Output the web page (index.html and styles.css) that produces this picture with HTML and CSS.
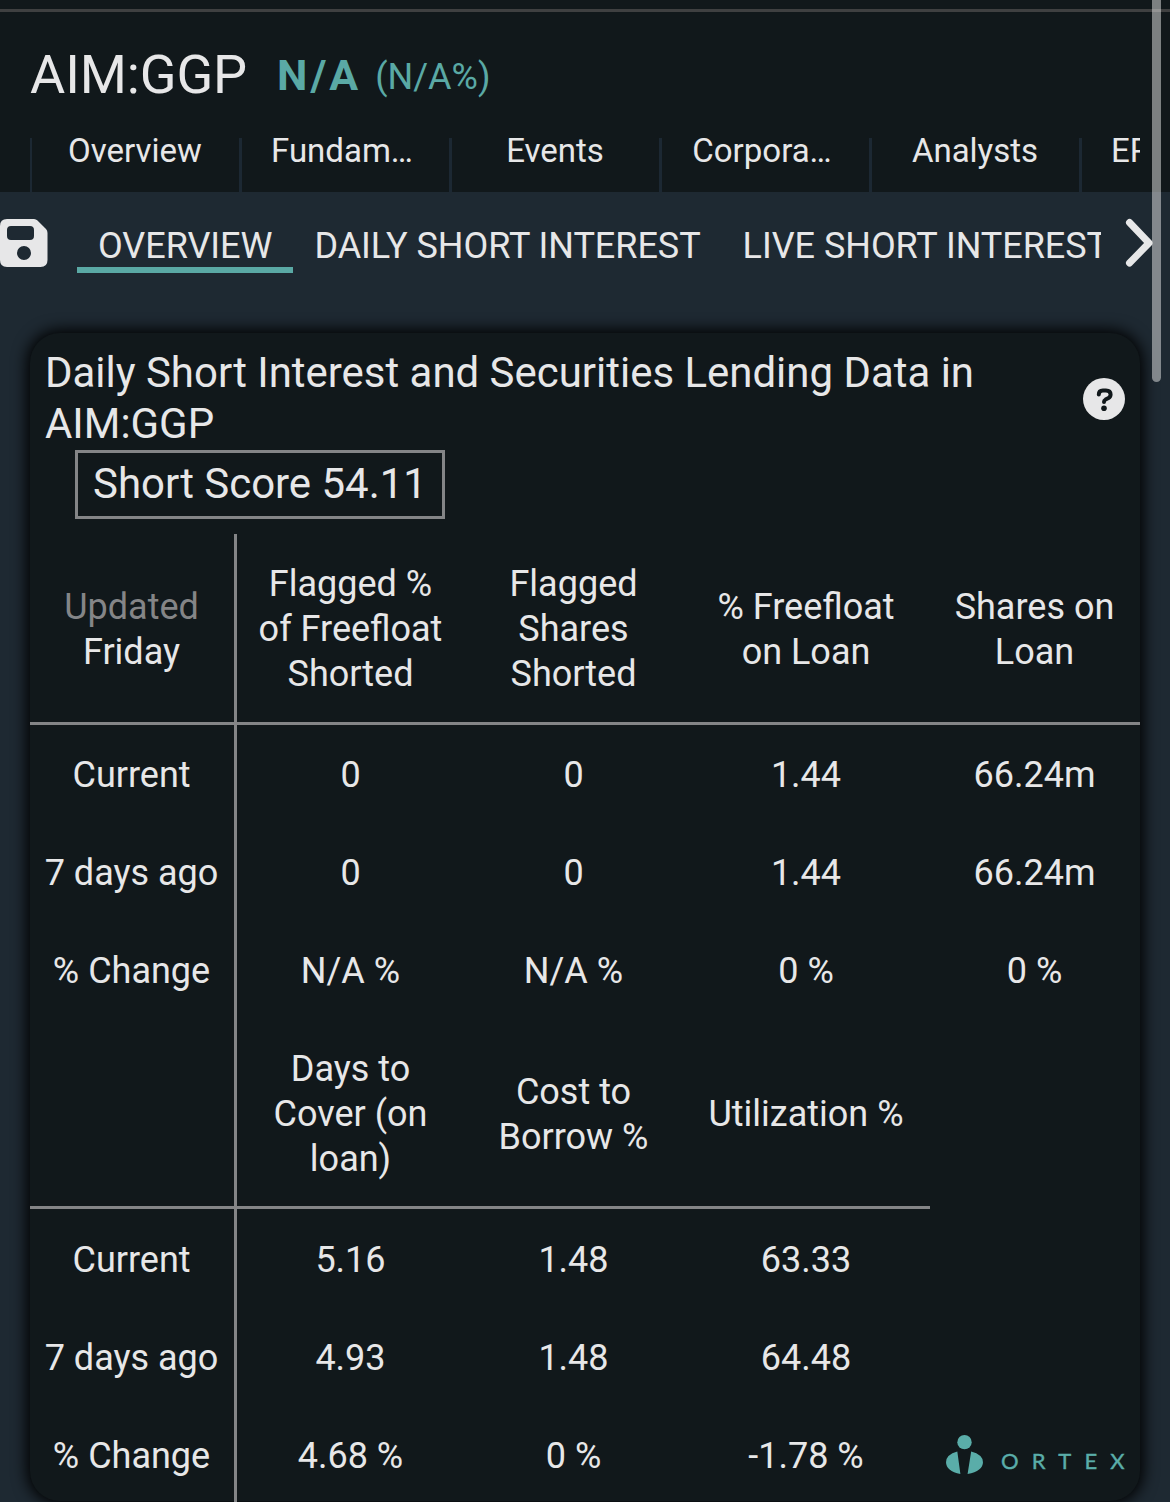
FILE: index.html
```html
<!DOCTYPE html>
<html lang="en">
<head>
    <meta charset="UTF-8">
    <meta name="viewport" content="width=device-width, initial-scale=1.0">
    <title>AIM:GGP</title>
    <link rel="stylesheet" href="styles.css">
</head>
<body>
    <header class="stock-header">
        <div class="stock-title">
            <h1>AIM:GGP</h1>
            <span class="price">N/A</span>
            <span class="change">(N/A%)</span>
        </div>
        <nav class="main-tabs">
            <a class="main-tab first">Overview</a>
            <a class="main-tab cut">Fundam…</a>
            <a class="main-tab">Events</a>
            <a class="main-tab cut">Corpora…</a>
            <a class="main-tab">Analysts</a>
            <a class="main-tab last">EPS</a>
        </nav>
    </header>

    <nav class="sub-nav">
        <svg class="save-icon" viewBox="0 0 48 48">
            <path fill="#e7e7e8" fill-rule="evenodd" d="M7 0H34Q36 0 37.500 1.500L46 10Q47.500 11.500 47.500 14V41Q47.500 48 40.500 48H7Q0 48 0 41V7Q0 0 7 0ZM11 7Q7 7 7 11V17Q7 21 11 21H30Q34 21 34 17V11Q34 7 30 7ZM24 27A7 7 0 1 0 24 41A7 7 0 1 0 24 27Z"/>
        </svg>
        <div class="sub-tabs">
            <a class="sub-tab active">OVERVIEW</a>
            <a class="sub-tab">DAILY SHORT INTEREST</a>
            <a class="sub-tab">LIVE SHORT INTEREST</a>
        </div>
        <svg class="next-icon" viewBox="0 0 30 50">
            <path d="M4.500 4.500L24 25L4.500 45" fill="none" stroke="#e7e7e8" stroke-width="7" stroke-linecap="round" stroke-linejoin="round"/>
        </svg>
    </nav>

    <main class="card">
        <div class="card-header">
            <h2>Daily Short Interest and Securities Lending Data in AIM:GGP</h2>
            <svg class="help-icon" viewBox="0 0 42 42">
                <circle cx="21" cy="21" r="21" fill="#e7e7e8"/>
                <path d="M15.800 16.500Q15.800 12.500 19.800 12.500H23Q27.600 12.500 27.600 16.500Q27.600 18.700 25.500 20L22.500 21.600Q21 22.500 21 24" fill="none" stroke="#11181b" stroke-width="4" stroke-linecap="round"/>
                <circle cx="21" cy="30.300" r="2.800" fill="#11181b"/>
            </svg>
        </div>
        <div class="short-score">Short Score 54.11</div>

        <table class="data">
            <colgroup>
                <col class="col-label">
                <col class="col-a">
                <col class="col-b">
                <col class="col-c">
                <col class="col-d">
            </colgroup>
            <tbody>
                <tr class="head">
                    <th><span class="muted">Updated</span><br>Friday</th>
                    <th>Flagged %<br>of Freefloat<br>Shorted</th>
                    <th>Flagged<br>Shares<br>Shorted</th>
                    <th>% Freefloat<br>on Loan</th>
                    <th>Shares on<br>Loan</th>
                </tr>
                <tr><th>Current</th><td>0</td><td>0</td><td>1.44</td><td>66.24m</td></tr>
                <tr><th>7 days ago</th><td>0</td><td>0</td><td>1.44</td><td>66.24m</td></tr>
                <tr><th>% Change</th><td>N/A %</td><td>N/A %</td><td>0 %</td><td>0 %</td></tr>
            </tbody>
            <tbody class="second">
                <tr class="head">
                    <th></th>
                    <th>Days to<br>Cover (on<br>loan)</th>
                    <th>Cost to<br>Borrow %</th>
                    <th>Utilization %</th>
                </tr>
                <tr><th>Current</th><td>5.16</td><td>1.48</td><td>63.33</td></tr>
                <tr><th>7 days ago</th><td>4.93</td><td>1.48</td><td>64.48</td></tr>
                <tr><th>% Change</th><td>4.68 %</td><td>0 %</td><td>-1.78 %</td></tr>
            </tbody>
        </table>

        <div class="brand">
            <svg class="brand-mark" viewBox="0 0 36 38">
                <circle cx="18" cy="7" r="7"/>
                <path d="M11 16L14 38Q0 35 0 26.500Q0 19 11 16ZM24.500 16Q36 19 36 26.500Q36 35 21 38Z"/>
            </svg>
            <span class="brand-name">ORTEX</span>
        </div>
    </main>

    <div class="scroll-thumb"></div>
</body>
</html>
```
FILE: styles.css
```css
* {
    box-sizing: border-box;
}

body {
    margin: 0;
    position: relative;
    height: 1502px;
    overflow: hidden;
    background: #1e2932;
    color: #e7e7e8;
    font-family: Roboto, sans-serif;
    font-size: 36px;
}

.stock-header {
    height: 192px;
    padding: 9px 30px 0;
    background: linear-gradient(#3f4041, #3f4041) 0 9px / 100% 3px no-repeat #11181b;
}

.stock-title {
    display: flex;
    align-items: center;
    height: 121px;
    padding-top: 11px;
}

.stock-title h1 {
    margin: 0;
    font-size: 54px;
    font-weight: 400;
    line-height: 64px;
    letter-spacing: -0.1px;
}

.price {
    margin-left: 30px;
    color: #5aa9a5;
    font-size: 43px;
    font-weight: 700;
    letter-spacing: 3px;
}

.change {
    margin-left: 14px;
    padding-top: 4px;
    color: #5aa9a5;
}

.main-tabs {
    display: flex;
    height: 62px;
    padding-top: 8px;
    overflow: hidden;
}

.main-tab {
    flex: 0 0 210px;
    padding-right: 1px;
    border-right: 3px solid #1c2833;
    font-size: 33px;
    line-height: 26px;
    text-align: center;
}

.main-tab.first {
    flex-basis: 212px;
    border-left: 2px solid #1c2833;
}

.main-tab.cut {
    padding-right: 7px;
}

.main-tab.last {
    padding-left: 29px;
    text-align: left;
}

.sub-nav {
    display: flex;
    height: 141px;
    padding-top: 27px;
}

.save-icon {
    width: 48px;
    height: 48px;
}

.sub-tabs {
    display: flex;
    width: 1024px;
    margin-left: 29px;
    overflow: hidden;
    white-space: nowrap;
}

.sub-tab {
    height: 54px;
    padding: 0 21px;
    line-height: 54px;
    letter-spacing: -0.04px;
}

.sub-tab.active {
    width: 217px;
    border-bottom: 6px solid #5aa9a5;
}

.next-icon {
    width: 30px;
    height: 50px;
    margin-left: 24px;
    margin-top: -1px;
}

.card {
    position: relative;
    height: 1168px;
    margin: 0 30px;
    background: #11181b;
    border-radius: 30px;
    box-shadow: 0 0 15px 3px #000;
}

.card-header {
    display: flex;
    align-items: center;
    justify-content: space-between;
    padding: 14px 15px 0 15px;
}

.card-header h2 {
    width: 960px;
    margin: 0;
    font-size: 42px;
    font-weight: 400;
    line-height: 51px;
    font-size: 41.95px;
}

.help-icon {
    width: 42px;
    height: 42px;
    margin-top: 2px;
}

.short-score {
    width: 370px;
    height: 69px;
    margin: 1px 0 15px 45px;
    padding-left: 15px;
    border: 3px solid #848587;
    font-size: 41.95px;
    line-height: 62px;
}

.data {
    width: 1110px;
    table-layout: fixed;
    border-spacing: 0;
    line-height: 45px;
    text-align: center;
}

.col-label { width: 207px; }
.col-a { width: 228px; }
.col-b { width: 218px; }
.col-c { width: 247px; }
.col-d { width: 210px; }

.data th,
.data td {
    height: 98px;
    padding: 2px 1px 0 0;
    font-weight: 400;
    white-space: nowrap;
}

.data th:first-child {
    border-right: 3px solid #848587;
}

.data .head th {
    height: 191px;
    padding-top: 3px;
    border-bottom: 3px solid #848587;
}

.data .second th,
.data .second td {
    padding-top: 4px;
}

.data .second .head th {
    height: 190px;
}

.muted {
    color: #848587;
}

.brand {
    position: absolute;
    right: 10px;
    bottom: 27px;
    display: flex;
    align-items: flex-end;
}

.brand-mark {
    width: 37px;
    height: 39px;
    fill: #5aada9;
}

.brand-name {
    width: 129px;
    margin-left: 18px;
    padding-bottom: 2px;
    color: #5aada9;
    font-family: Lato, sans-serif;
    font-size: 22px;
    line-height: 23px;
    letter-spacing: 13.2px;
    -webkit-text-stroke: 0.4px #5aada9;
}

/* page scrollbar */
.scroll-thumb {
    position: absolute;
    top: -10px;
    right: 9px;
    width: 9px;
    height: 392px;
    background: rgba(231, 231, 232, 0.5);
    border-radius: 5px;
}
```
